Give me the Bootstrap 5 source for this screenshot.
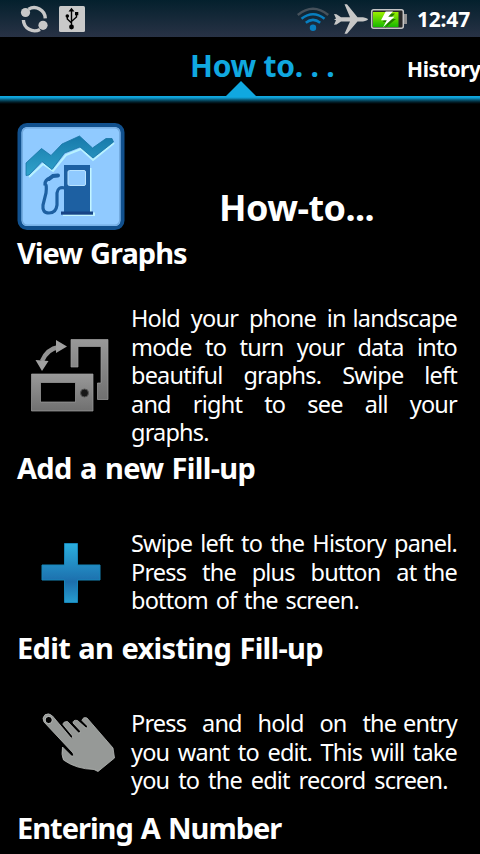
<!DOCTYPE html>
<html lang="en">
<head>
<meta charset="utf-8">
<meta name="viewport" content="width=device-width, initial-scale=1">
<title>How to</title>
<link rel="stylesheet" href="https://cdn.jsdelivr.net/npm/bootstrap@5.3.0/dist/css/bootstrap.min.css">
<style>
body{background:#000;color:#fff;font-family:"Noto Sans","Open Sans",sans-serif;width:480px;height:854px}
svg{display:block;flex:none}
.status{height:37px;background:linear-gradient(#04202d,#283245);padding-left:20px;padding-right:9px}
.clock{font-size:21px;line-height:37px;letter-spacing:-.2px;width:54px;padding-top:2px;white-space:nowrap}
.tabs{height:59px;display:grid;grid-template-columns:190px 217px 73px}
.tab-on{font-size:30px;line-height:57px;color:#10a8e0;letter-spacing:-.25px}
.tab-next{font-size:21px;line-height:65px;letter-spacing:-.4px}
.caret{width:30px;height:15px;left:226px;bottom:0;background:#10a8e0;clip-path:polygon(50% 0,100% 100%,0 100%)}
.rule{height:8px;background:linear-gradient(#10a8e0 0 1px,#0e96c9 2px,#07536f 4px,#02202c 6px,#000)}
.hero{height:131px;padding:18px 0 0 16px}
.hero h1{font-size:36px;line-height:44px;margin:64px 0 0 93px;letter-spacing:-.55px}
.topic h2{font-size:29px;line-height:36px;margin:0;padding-left:17px;letter-spacing:-.7px;word-spacing:1.5px}
.topic h2.snug{letter-spacing:-1px;word-spacing:1.5px}
.topic{height:180px}
.topic.tall{height:215px}
.topic.cut{height:44px}
.pic{width:131px}
.copy{width:326px;font-size:23.5px;line-height:28.5px;letter-spacing:-.8px;word-spacing:2.3px;padding-top:43px}
.tall .copy{padding-top:33px}
.copy span{display:block;white-space:nowrap;text-align-last:justify}
.copy span:last-child{text-align-last:left}
.copy .wide{word-spacing:3.5px}
.copy b{font-weight:400;word-spacing:1.5px;display:inline-block}
</style>
<script src="https://cdn.jsdelivr.net/npm/bootstrap@5.3.0/dist/js/bootstrap.bundle.min.js"></script>
</head>
<body class="overflow-hidden">
<header>
<div class="status d-flex align-items-center">
<svg width="29" height="37" viewBox="20 0 29 37"><g fill="none" stroke="#c8c8c8" stroke-width="3.4"><path d="M28.5 9.2A11.2 11.2 0 0 1 45.3 18.3"/><path d="M23.4 20A11.2 11.2 0 0 0 40 29.4"/></g><circle cx="25.5" cy="12.5" r="4.6" fill="#c8c8c8"/><circle cx="43" cy="25.3" r="4.6" fill="#c8c8c8"/></svg>
<svg class="ms-2" width="30" height="37" viewBox="57 0 30 37"><rect x="59" y="6" width="26" height="26" rx="1.5" fill="#c9c9c9"/><g fill="none" stroke="#000" stroke-width="1.4"><path d="M71.5 10V27M71.5 23L67.3 19V16M71.5 21.5L76.5 17V13"/></g><path d="M68.5 11.5L71.5 7.8 74.5 11.5zM75 12h3.3v3.3H75z"/><circle cx="67.3" cy="16" r="1.8"/><circle cx="71.5" cy="27" r="2.4"/></svg>
<svg class="ms-auto me-2" width="112" height="37" viewBox="297 0 112 37"><defs><linearGradient id="bt" x2="0" y2="1"><stop stop-color="#9bed00"/><stop offset="1" stop-color="#16b900"/></linearGradient></defs>
<g fill="none" stroke-width="2.5"><path stroke="#46515b" d="M297.8 15Q313 2.5 328.2 15"/><path stroke="#087fc0" d="M301.5 18.8Q313 9.8 324.5 18.8M305.8 22.7Q313 17 320.2 22.7"/></g><circle cx="313" cy="27.7" r="3.2" fill="#087fc0"/>
<path fill="#c7c7c7" d="M334 14L336.5 14.3 341 17.3H350L344.5 4.3H347L357.5 17.2H363Q367.5 18 368 19.2 367.5 20.7 363 21.4H357.5L347 33.8H344.5L350 21.5H341L336.5 24.6 334 24.8 336 20.2 334 19.5 336 18.5z"/>
<path fill="#909090" d="M403 14h4v10H403z"/><rect x="371.7" y="9.7" width="31.6" height="18.6" rx="2" fill="#282828" stroke="#c5c5c5" stroke-width="1.5"/><path fill="url(#bt)" d="M373 12h25.5v15H373z"/><path fill="#237c00" d="M386.5 13.5L383 22h5L385 28 396 19h-6L395 13.5z"/><path fill="#fff" d="M385.7 11.5L381 20.3h5.8L383 27.3 394.5 16.8h-6.3L393 11.5z"/></svg>
<div class="clock fw-bold ms-0">12:47</div>
</div>
<nav class="tabs position-relative fw-bold text-nowrap"><div></div><div class="tab-on">How to. . .</div><div class="tab-next">History</div><div class="caret position-absolute"></div></nav>
<div class="rule"></div>
</header>
<main>
<section class="hero d-flex">
<svg width="110" height="110" viewBox="16 122 110 110"><defs><linearGradient id="gr" x2="0" y2="1"><stop stop-color="#1779aa"/><stop offset="1" stop-color="#2fa3cb"/></linearGradient></defs>
<rect x="19.5" y="125" width="103" height="103" rx="7.5" fill="#90caff" stroke="#11508d" stroke-width="4"/><rect x="22.3" y="127.8" width="97.4" height="97.4" rx="5" fill="none" stroke="#72aadf" stroke-width="1.3"/>
<path fill="none" stroke="#b8f2ff" stroke-width="2" d="M29 177L43 164 53 171 66 155 81 149 93 160 114 143"/>
<path fill="url(#gr)" stroke="#1673a3" stroke-width=".8" d="M26 163L41.5 148.5 51 155.5 62 144 79.5 136 92.5 148 106 138.5H112L113.5 142 93 158 80 147 64.5 153 52 169.5 42 161.5 29 175 26 175.5z"/>
<path fill="#c4f6ff" d="M68 168h23.5v44.5H95V216H63v-2h5z"/><path fill="#1d60a2" d="M64 165h26v47H64z"/><path fill="#174588" d="M61 211.5h32v3.2H61z"/><rect x="68" y="170.5" width="17.5" height="15" rx="1.5" fill="#90caff" stroke="#b9e3ff"/><g fill="none" stroke="#1d60a2" stroke-linecap="round"><path stroke-width="3.2" d="M65 188Q58 186 57 193V205Q56 213 49 213 42 213 43 205L46 193Q47 184 45 184 45 180 50 178"/><path stroke-width="4" d="M49 179L53 176 58 175.5"/></g></svg>
<h1 class="fw-bold">How-to...</h1>
</section>
<section class="topic tall"><h2 class="fw-bold snug">View Graphs</h2>
<div class="d-flex"><div class="pic"><svg width="130" height="170" viewBox="0 271 130 170"><defs><linearGradient id="sg" x2="0" y2="1"><stop stop-color="#999"/><stop offset="1" stop-color="#707070"/></linearGradient></defs>
<path fill="url(#sg)" stroke="#a0a0a0" stroke-width=".7" d="M71 339.5h37v60H97.5V383h3.5v-36.5H78V367h-7z"/>
<path fill="url(#sg)" fill-rule="evenodd" stroke="#a0a0a0" stroke-width=".7" d="M31.5 374h61.5v37H31.5zM40.5 382.5V402H75.5V382.5z"/><circle cx="84.5" cy="393" r="4" fill="#171717" stroke="#555"/>
<path fill="none" stroke="#929292" stroke-width="4.5" d="M42 361Q47 349 59 347"/><path fill="#a0a0a0" d="M56 340L67 346.5 56 353zM35.5 360L48.5 361 42 371z"/></svg></div>
<div class="copy"><span>Hold your phone <b>in landscape</b></span><span>mode to turn your data into</span><span>beautiful graphs. Swipe left</span><span>and right to see all your</span><span>graphs.</span></div></div></section>
<section class="topic"><h2 class="fw-bold">Add a new Fill-up</h2>
<div class="d-flex"><div class="pic"><svg width="130" height="140" viewBox="0 486 130 140"><defs><linearGradient id="pg" x2="0" y2="1"><stop stop-color="#2bafdf"/><stop offset=".65" stop-color="#1c6eac"/><stop offset="1" stop-color="#279dcf"/></linearGradient></defs><path fill="url(#pg)" stroke="#1685b8" stroke-linejoin="round" d="M64.5 543.5h13v21.5H100v15H77.5v22.5h-13V580H42v-15h22.5z"/></svg></div>
<div class="copy"><span>Swipe left to the History panel.</span><span>Press the plus button <b>at the</b></span><span>bottom of the screen.</span></div></div></section>
<section class="topic"><h2 class="fw-bold">Edit an existing Fill-up</h2>
<div class="d-flex"><div class="pic"><svg width="130" height="140" viewBox="0 666 130 140"><path fill="#969997" stroke="#b8bab8" stroke-width=".8" stroke-linejoin="round" d="M44 722Q41.5 718 45 714.7 49 712.5 52.5 716L71 738Q73.5 739 72.5 736L63 724.5Q63 721.5 67.5 721.5L78.5 733Q81 733 80.5 731L73 723Q73 719.5 77.5 720.5L86 728Q88 728 87.5 726L82 720.5Q83 716.5 87 718L113 748 114.5 758 98 771.5 94 769.5Q76 769 63.5 760 61 755 62.5 747L71.5 756Q74.5 756.5 73 753z"/><circle cx="48.7" cy="720" r="3.6" fill="#000" stroke="#c5c7c5"/></svg></div>
<div class="copy"><span>Press and hold on <b>the entry</b></span><span>you want to edit. This will take</span><span class="wide">you to the edit record screen.</span></div></div></section>
<section class="topic cut"><h2 class="fw-bold snug">Entering A Number</h2></section>
</main>
</body>
</html>
